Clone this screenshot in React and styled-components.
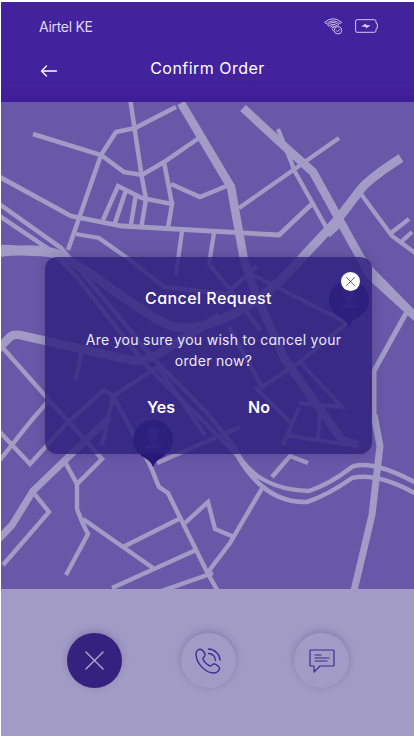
import React from "react";
import styled, { createGlobalStyle } from "styled-components";

const GlobalStyle = createGlobalStyle`
  body { margin: 0; background: #fff; font-family: Inter, "Open Sans", sans-serif; font-feature-settings: "cv11" 1, "ss03" 1; }
  * { box-sizing: border-box; }
`;

const Screen = styled.div`
  width: 414px;
  height: 736px;
  padding: 2px 0 0 1px;
  display: grid;
  grid-template-rows: 100px 487px 147px;
  overflow: hidden;
`;

const Header = styled.header`
  background: linear-gradient(#43229d 0, #43229d 78%, #3e1d96 100%);
  color: #fff;
`;

const StatusBar = styled.div`
  height: 50px;
  padding: 0 36px 0 38px;
  display: flex;
  align-items: center;
  justify-content: space-between;
  color: #e0daf0;
`;

const StatusIcons = styled.div`
  display: flex;
  gap: 12px;
  align-items: center;
  height: 52px;
  padding-bottom: 2px;
`;

const Carrier = styled.span`
  font-size: 14px;
  line-height: 20px;
  letter-spacing: -0.3px;
`;

const TitleBar = styled.div`
  height: 34px;
  padding: 0 39px;
  display: grid;
  grid-template-columns: 18px 1fr 18px;
  align-items: center;
`;

const Title = styled.h1`
  margin: 0;
  padding-bottom: 2px;
  font-size: 16px;
  line-height: 22px;
  font-weight: 400;
  text-align: center;
  white-space: nowrap;
  letter-spacing: 0.48px;
`;

const BackButton = styled.button`
  all: unset;
  display: flex;
  padding-top: 4px;
`;

const MapArea = styled.main`
  position: relative;
  background: #6859a8;
  overflow: hidden;
`;

const MapDrawing = styled.svg`
  display: block;
`;

const Dialog = styled.section`
  position: absolute;
  left: 44px;
  top: 155px;
  width: 327px;
  height: 197px;
  border-radius: 12px;
  background: rgba(47, 33, 126, 0.83);
  box-shadow: 0 0 12px rgba(47, 33, 90, 0.3);
  color: #fff;
  text-align: center;
  padding: 30px 0 0;
`;

const DialogTitle = styled.h2`
  margin: 0;
  font-size: 16px;
  line-height: 22px;
  font-weight: 550;
  letter-spacing: 0.45px;
`;

const Message = styled.p`
  margin: 20px 0 0 10px;
  font-size: 14px;
  line-height: 21px;
  letter-spacing: 0.29px;
  color: #ece9f5;
`;

const Choices = styled.div`
  display: grid;
  grid-template-columns: 98px 98px;
  justify-content: center;
  margin-top: 25px;
  padding-left: 3px;
`;

const Choice = styled.button`
  all: unset;
  text-align: center;
  font-size: 16px;
  line-height: 22px;
  font-weight: 600;
`;

const CloseBadge = styled.button`
  all: unset;
  position: absolute;
  top: 15px;
  right: 12px;
  width: 19px;
  height: 19px;
  border-radius: 50%;
  background: #fff;
  display: grid;
  place-items: center;
`;

const Actions = styled.footer`
  background: #a19bc6;
  display: grid;
  grid-template-columns: repeat(3, 55px);
  column-gap: 58.5px;
  padding: 44px 0 0 66px;
  align-items: start;
`;

const RoundButton = styled.button`
  all: unset;
  width: 55px;
  height: 55px;
  border-radius: 50%;
  display: grid;
  place-items: center;
  background: ${(p) => (p.$filled ? "#33237f" : "#a19bc6")};
  color: ${(p) => (p.$filled ? "#a9a2cc" : "#3d2b91")};
  box-shadow: 0 -2px 7px rgba(70, 55, 110, 0.3);
`;

const roads = [
  [4.5, "M33 134L101 155L124 172L142 175L164 162L199 138M101 155L116 132L135 128L176 107M101 155L68 250M130 98L142 178L146 199L141 229M103 220L118 186L142 198L172 204L168 228M115 223L126 190M131 224L136 194M164 162L172 204M171 184L200 197L229 185"],
  [4.8, "M-2 176L71 216L122 226L279 235L314 202"],
  [4.3, "M76 234L99 238L130 260L164 287L226 294L257 266M182 231L176 275M214 233L209 264L228 287L260 330M239 208L339 138M278 129L292 164L294 170L330 234L339 226M361 194L392 236L418 255M391 233L409 219M400 243L412 232"],
  [8.5, "M181 103L231 187L244 260L256 295L285 360L342 440L359 445"],
  [8.5, "M243 108L283 145L313 172L339 219L370 275L418 319"],
  [9, "M401 158Q370 178 361 189L338 219L300 260Q263 302 225 318Q190 334 166 324Q150 316 120 295Q88 270 55 253Q32 247 -2 252"],
  [4.5, "M-2 203L61 248L84 275L154 359L207 413L233 445C246 475 273 490 309 491C340 480 351 466 354 466Q376 461 418 484M-2 215L50 250L76 276L145 364L202 420L237 455C254 485 277 503 307 502Q328 495 352 478Q378 472 418 495"],
  [8.5, "M-2 349L9 338Q12 334 20 335L134 361Q149 361 168 348L220 316"],
  [4.4, "M2 347L49 400L102 459L77 484L64 460M49 400L31 421L0 460M-2 430L30 464L68 422L104 390L113 396L102 445M81 353L76 380M113 396L158 367L205 435M113 396L150 465L159 487L168 493L207 572L220 595"],
  [7, "M110 417L33 491L12 525L-3 541"],
  [4.4, "M33 492L49 512L3 565M77 484L77 509L83 524L88 534L66 575M83 519L153 568M123 547L179 519M112 588L196 550M150 595L213 573M208 572L230 543L264 485M157 463L240 427M185 523L208 502L215 529L234 537M272 477L290 456L308 463"],
  [5, "M359 257L409 308L374 371L374 415"],
  [7, "M374 415L380 446L372 515L353 595"],
  [4, "M245 271L347 323L300 362L262 387L229 327M300 362L342 407L299 403M255 387L292 424L283 445L299 408M285 435L356 446M320 410L318 440"],
];

const pins = [[153, 440], [349, 300]];

function CityMap() {
  return (
    <MapDrawing width="413" height="487" viewBox="1 102 413 487">
      <path d="M0 245Q12 244 24 247L58 251L66 260L48 257Q18 254 0 257Z" fill="#a19bc6" />
      {roads.map(([width, d], i) => (
        <path key={i} d={d} fill="none" stroke="#a19bc6" strokeWidth={width} strokeLinejoin="miter" />
      ))}
      {pins.map(([x, y]) => (
        <g key={x} transform={`translate(${x} ${y})`}>
          <path d="M-20 0A20 20 0 1 1 20 0C20 9 14 15 5 20Q1 23 0 27Q-1 23 -5 20C-14 15-20 9-20 0Z" fill="#281879" />
          <path d="M-6-7C-6-15 6-15 6-7Q5 0 2 2Q3 5 10 8H-10Q-3 5-2 2Q-6-1-6-7Z" fill="#49399a" />
        </g>
      ))}
    </MapDrawing>
  );
}

function WifiOff() {
  return (
    <svg width="19" height="17" viewBox="0 0 19 17" fill="none" stroke="#c7bee4" strokeWidth="1" strokeLinejoin="round">
      <path d="M.6 4.3Q9 -2.8 17.6 4.3L16.1 5.7Q9 0 2.1 5.7ZM3.4 6.8Q9 2 14.8 6.8L13.3 8.1Q9 4.5 4.9 8.1ZM6.2 9.2Q9 6.5 12 9M7.6 10.5L9 9.2L10.6 10.2M8 11L10 13.4" />
      <circle cx="14" cy="12.3" r="3.7" /><path d="M12.2 12.4L13.5 13.7L16 11" />
    </svg>
  );
}

function Battery() {
  return (
    <svg width="23" height="14" viewBox="0 0 23 14" fill="none" stroke="#d3cbea">
      <path d="M2 .7H19.5Q21 .7 21 2.3V4.2L22.3 4.8V9.2L21 9.8V11.7Q21 13.3 19.5 13.3H2Q.6 13.3.6 11.7V2.3Q.6.7 2 .7Z" />
      <path d="M6.2 7.4L11 4.4V6.1L15.5 6.5L10.8 9.6V7.8Z" fill="#e0daf0" stroke="none" />
    </svg>
  );
}

function Cross({ size, width, color = "currentColor" }) {
  return (
    <svg width={size} height={size} viewBox="0 0 20 20" fill="none" stroke={color} strokeWidth={width} strokeLinecap="round">
      <path d="M1 1L19 19M19 1L1 19" />
    </svg>
  );
}

export default function App() {
  return (
    <>
      <GlobalStyle />
      <Screen>
        <Header>
          <StatusBar>
            <Carrier>Airtel KE</Carrier>
            <StatusIcons><WifiOff /><Battery /></StatusIcons>
          </StatusBar>
          <TitleBar>
            <BackButton aria-label="Back">
              <svg width="18" height="12" viewBox="0 0 18 12" fill="none" stroke="#fff" strokeWidth="1.3" strokeLinecap="round" strokeLinejoin="round"><path d="M6.5 1L1.5 6L6.5 11M1.5 6H16.5" /></svg>
            </BackButton>
            <Title>Confirm Order</Title>
          </TitleBar>
        </Header>
        <MapArea>
          <CityMap />
          <Dialog role="dialog">
            <CloseBadge aria-label="Close"><Cross size={9} width={2} color="#56479a" /></CloseBadge>
            <DialogTitle>Cancel Request</DialogTitle>
            <Message>Are you sure you wish to cancel your<br />order now?</Message>
            <Choices><Choice>Yes</Choice><Choice>No</Choice></Choices>
          </Dialog>
        </MapArea>
        <Actions>
          <RoundButton $filled aria-label="Cancel"><Cross size={19} width={1.5} /></RoundButton>
          <RoundButton aria-label="Call">
            <svg width="26" height="26" viewBox="0 0 26 26" fill="none" stroke="currentColor" strokeWidth="1.4" strokeLinecap="round" strokeLinejoin="round">
              <path d="M6 1.5C4 .5 1 3 1 6C1 15 10 25 19 25C22 25 25 22 24.5 20C24 18 20 15.5 18.5 16C17 16.5 16.5 18.5 15 18C12 17 8 12.5 8 10.5C8 9.5 10 8.5 10 7C10 5 8 2.2 6 1.5ZM13.5 1C19.5 1 25 6.5 25 12M13.5 5.5C17.5 5.5 20.5 8.5 20.5 12.5" />
            </svg>
          </RoundButton>
          <RoundButton aria-label="Message">
            <svg width="26" height="24" viewBox="0 0 26 24" fill="none" stroke="currentColor" strokeWidth="1.2" strokeLinejoin="round" strokeLinecap="round">
              <path d="M2 1H24Q25 1 25 2V16Q25 17 24 17H11L5 23V17H2Q1 17 1 16V2Q1 1 2 1ZM6 6H12M6 9H20M6 12H18" />
            </svg>
          </RoundButton>
        </Actions>
      </Screen>
    </>
  );
}
